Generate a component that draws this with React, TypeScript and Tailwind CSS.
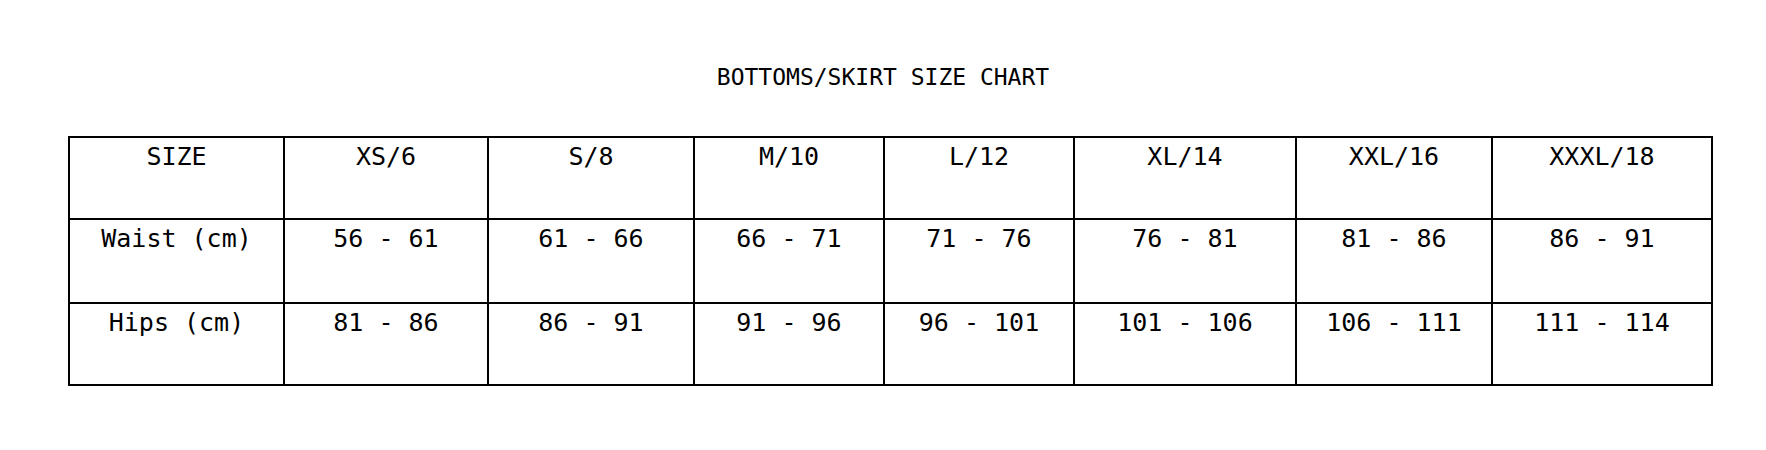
const columns = [
  { label: 'SIZE', width: 'w-[215px]' },
  { label: 'XS/6', width: 'w-[204px]' },
  { label: 'S/8', width: 'w-[206px]' },
  { label: 'M/10', width: 'w-[190px]' },
  { label: 'L/12', width: 'w-[190px]' },
  { label: 'XL/14', width: 'w-[222px]' },
  { label: 'XXL/16', width: 'w-[196px]' },
  { label: 'XXXL/18', width: 'w-[220px]' },
];

const rows = [
  {
    height: 'h-[84px]',
    cells: ['Waist (cm)', '56 - 61', '61 - 66', '66 - 71', '71 - 76', '76 - 81', '81 - 86', '86 - 91'],
  },
  {
    height: 'h-[82px]',
    cells: ['Hips (cm)', '81 - 86', '86 - 91', '91 - 96', '96 - 101', '101 - 106', '106 - 111', '111 - 114'],
  },
];

export default function App() {
  return (
    <div className="w-[1766px] h-[450px] bg-white text-black font-['DejaVu_Sans_Mono',monospace]">
      <h1 className="pt-[62px] text-center text-[23px] leading-[30px]">
        BOTTOMS/SKIRT SIZE CHART
      </h1>
      <div className="pl-[68px] pt-[44px]">
        <table className="border-collapse border-2 border-black table-fixed w-[1643px] text-[25px]">
          <tbody>
            <tr className="h-[82px]">
              {columns.map((col) => (
                <td
                  key={col.label}
                  className={`${col.width} border-2 border-black text-center align-top pt-[3px] leading-[32px]`}
                >
                  {col.label}
                </td>
              ))}
            </tr>
            {rows.map((row) => (
              <tr key={row.cells[0]} className={row.height}>
                {row.cells.map((cell, i) => (
                  <td
                    key={i}
                    className="border-2 border-black text-center align-top pt-[3px] leading-[32px]"
                  >
                    {cell}
                  </td>
                ))}
              </tr>
            ))}
          </tbody>
        </table>
      </div>
    </div>
  );
}
